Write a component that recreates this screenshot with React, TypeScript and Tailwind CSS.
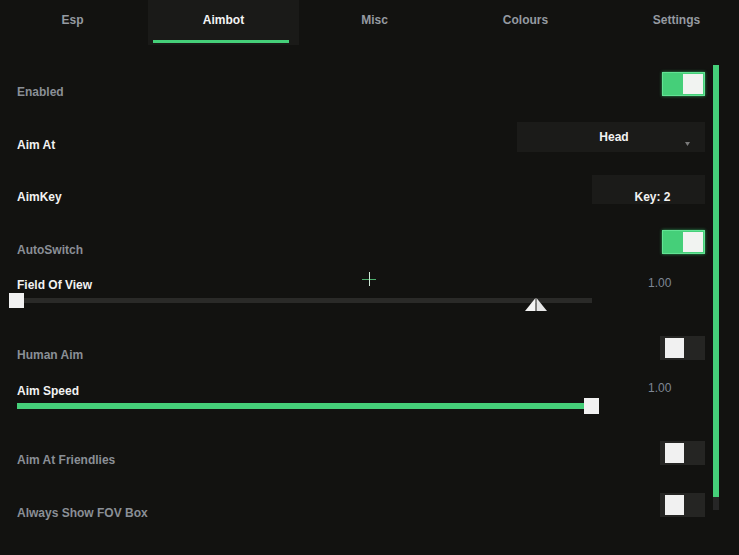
const tabs = ['Esp', 'Aimbot', 'Misc', 'Colours', 'Settings'];

function Toggle({ on, className = '' }: { on: boolean; className?: string }) {
  if (on) {
    return (
      <div
        className={`flex h-[24px] w-[43px] items-center justify-end border border-[#62e394] bg-[#45cf79] pr-[1px] shadow-[0_0_3px_#2f9a58] ${className}`}
      >
        <div className="h-[20px] w-[20px] bg-[#f1f3f1]" />
      </div>
    );
  }
  return (
    <div className={`flex h-[24px] w-[45px] items-center bg-[#252523] pl-[5px] ${className}`}>
      <div className="h-[20px] w-[19px] bg-[#f1f1f1]" />
    </div>
  );
}

function Label({ text, dim, className = '' }: { text: string; dim?: boolean; className?: string }) {
  return (
    <div
      className={`text-[12px] font-bold leading-[14px] ${dim ? 'text-[#8a8f96]' : 'text-[#f2f2f2]'} ${className}`}
    >
      {text}
    </div>
  );
}

export default function App() {
  return (
    <div
      className="relative h-[555px] w-full overflow-hidden bg-[#121210]"
      style={{ fontFamily: '"Liberation Sans", Arial, sans-serif' }}
    >
      {/* tabs */}
      <div className="-ml-[3px] flex h-[45px]">
        {tabs.map((t) => {
          const active = t === 'Aimbot';
          return (
            <div
              key={t}
              className={`relative flex w-[151px] shrink-0 justify-center pt-[13px] text-[12px] font-bold leading-[14px] ${
                active ? 'bg-[#1a1a18] text-[#f4f4f4]' : 'text-[#959aa1]'
              }`}
            >
              {t}
              {active && <div className="absolute bottom-[2px] left-[5px] right-[10px] h-[3px] bg-[#45cf79]" />}
            </div>
          );
        })}
      </div>

      <div className="flex">
        <div className="w-[705px] shrink-0 pl-[17px]">
          {/* Enabled */}
          <div className="flex h-[65px] items-start justify-between">
            <Label text="Enabled" dim className="mt-[40px]" />
            <Toggle on className="mt-[27px]" />
          </div>

          {/* Aim At */}
          <div className="flex h-[52px] items-start justify-between">
            <Label text="Aim At" className="mt-[28px]" />
            <div className="relative mt-[12px] flex h-[30px] w-[188px] items-center justify-center bg-[#1b1b19] pl-[6px] text-[12px] font-bold text-[#f2f2f2]">
              Head
              <svg className="absolute right-[15px] top-[20px]" width="5" height="4" viewBox="0 0 5 4">
                <path d="M0 0 L5 0 L2.5 4 Z" fill="#7a7a7a" />
              </svg>
            </div>
          </div>

          {/* AimKey */}
          <div className="flex h-[53px] items-start justify-between">
            <Label text="AimKey" className="mt-[28px]" />
            <div className="mt-[13px] flex h-[29px] w-[113px] justify-center bg-[#1b1b19] pl-[8px] pt-[15px] text-[12px] font-bold leading-[14px] text-[#f2f2f2]">
              Key: 2
            </div>
          </div>

          {/* AutoSwitch */}
          <div className="flex h-[53px] items-start justify-between">
            <Label text="AutoSwitch" dim className="mt-[28px]" />
            <Toggle on className="mt-[15px]" />
          </div>

          {/* Field Of View */}
          <div className="flex h-[57px] items-start">
            <div className="w-[575px] shrink-0">
              <Label text="Field Of View" className="mt-[10px]" />
              <div className="relative mt-[1px] h-[16px]">
                <div className="absolute left-0 right-0 top-[5px] h-[5px] bg-[#2a2a28]" />
                <div className="absolute -left-[8px] top-0 h-[15px] w-[15px] bg-[#f1f1f1]" />
              </div>
            </div>
            <div className="mt-[8px] pl-[56px] text-[12px] leading-[14px] text-[#7e8694]">1.00</div>
          </div>

          {/* Human Aim */}
          <div className="flex h-[50px] items-start justify-between">
            <Label text="Human Aim" dim className="mt-[23px]" />
            <Toggle on={false} className="mt-[11px]" />
          </div>

          {/* Aim Speed */}
          <div className="flex h-[55px] items-start">
            <div className="w-[575px] shrink-0">
              <Label text="Aim Speed" className="mt-[9px]" />
              <div className="relative h-[16px]">
                <div className="absolute left-0 right-0 top-[5px] h-[6px] bg-[#45cf79]" />
                <div className="absolute -right-[7px] top-0 h-[16px] w-[15px] bg-[#f1f1f1]" />
              </div>
            </div>
            <div className="mt-[6px] pl-[56px] text-[12px] leading-[14px] text-[#7e8694]">1.00</div>
          </div>

          {/* Aim At Friendlies */}
          <div className="flex h-[52px] items-start justify-between">
            <Label text="Aim At Friendlies" dim className="mt-[23px]" />
            <Toggle on={false} className="mt-[11px]" />
          </div>

          {/* Always Show FOV Box */}
          <div className="flex h-[53px] items-start justify-between">
            <Label text="Always Show FOV Box" dim className="mt-[24px]" />
            <Toggle on={false} className="mt-[11px]" />
          </div>
        </div>

        {/* scrollbar */}
        <div className="ml-[8px] mt-[20px] flex w-[6px] flex-col">
          <div className="h-[432px] bg-[#45cf79]" />
          <div className="h-[13px] bg-[#262626]" />
        </div>
      </div>

      {/* crosshair cursor */}
      <svg className="absolute left-[361px] top-[271px]" width="16" height="16" viewBox="0 0 16 16">
        <path d="M1 8.5 H15" stroke="#4fae6e" strokeWidth="1" />
        <path d="M8.5 1 V15" stroke="#cfe8d6" strokeWidth="1" />
      </svg>

      {/* arrow cursor */}
      <svg className="absolute left-[525px] top-[298px]" width="22" height="14" viewBox="0 0 22 14">
        <path d="M10.5 0 L0 13 L10.5 13 Z" fill="#f4f4f4" />
        <path d="M11.5 0 L22 13 L11.5 13 Z" fill="#e6e6e6" />
      </svg>
    </div>
  );
}
